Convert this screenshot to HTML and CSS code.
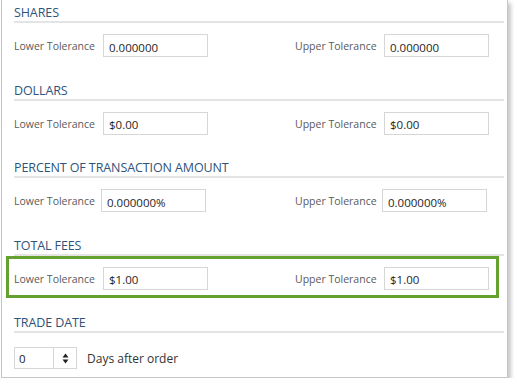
FILE: index.html
```html
<!DOCTYPE html>
<html>
<head>
<meta charset="utf-8">
<link rel="stylesheet" href="styles.css">
</head>
<body>
<div class="panel">
  <section class="group">
    <h2 class="group-title">SHARES</h2>
    <div class="pair">
      <label class="field"><span class="field-label">Lower Tolerance</span><input class="text-input" value="0.000000"></label>
      <label class="field"><span class="field-label">Upper Tolerance</span><input class="text-input" value="0.000000"></label>
    </div>
  </section>
  <section class="group">
    <h2 class="group-title">DOLLARS</h2>
    <div class="pair">
      <label class="field"><span class="field-label">Lower Tolerance</span><input class="text-input" value="$0.00"></label>
      <label class="field"><span class="field-label">Upper Tolerance</span><input class="text-input" value="$0.00"></label>
    </div>
  </section>
  <section class="group">
    <h2 class="group-title">PERCENT OF TRANSACTION AMOUNT</h2>
    <div class="pair pair-shift">
      <label class="field"><span class="field-label">Lower Tolerance</span><input class="text-input" value="0.000000%"></label>
      <label class="field"><span class="field-label">Upper Tolerance</span><input class="text-input" value="0.000000%"></label>
    </div>
  </section>
  <section class="group">
    <h2 class="group-title">TOTAL FEES</h2>
    <div class="pair highlighted">
      <label class="field"><span class="field-label">Lower Tolerance</span><input class="text-input" value="$1.00"></label>
      <label class="field"><span class="field-label">Upper Tolerance</span><input class="text-input" value="$1.00"></label>
    </div>
  </section>
  <section class="group group-last">
    <h2 class="group-title">TRADE DATE</h2>
    <div class="days-row">
      <div class="spinner">
        <span class="spinner-value">0</span>
        <span class="spinner-arrows">
          <svg width="7" height="11" viewBox="0 0 7 11"><path d="M3.5 0.5 L6.5 4.5 L0.5 4.5 Z" fill="#222"/><path d="M3.5 10.5 L6.5 6.5 L0.5 6.5 Z" fill="#222"/></svg>
        </span>
      </div>
      <span class="days-label">Days after order</span>
    </div>
  </section>
</div>
</body>
</html>
```
FILE: styles.css
```css
* { box-sizing: border-box; }
html, body { margin: 0; padding: 0; background: #fff; }
body { font-family: "Open Sans", "Noto Sans", sans-serif; }

.panel {
  margin-left: 1px;
  width: 507px;
  background: #fff;
  border: 1px solid #c6c6c6;
  border-top: none;
  box-shadow: 3px 3px 4px rgba(0,0,0,0.22);
  padding: 4px 3px 8px 12px;
}

.group { margin-bottom: 24.5px; }
.group-last { margin-bottom: 0; }

.group-title {
  margin: 0;
  font-size: 12.5px;
  font-weight: 400;
  line-height: 17px;
  color: #2f5479;
  border-bottom: 2px solid #e4e4e4;
  letter-spacing: -0.1px;
}

.pair {
  margin-top: 11px;
  display: grid;
  grid-template-columns: 281px 1fr;
  height: 23px;
  position: relative;
}
.pair-shift .text-input { margin-left: -2px; }

.highlighted::after {
  content: "";
  position: absolute;
  left: -8px;
  right: 5px;
  top: -11px;
  bottom: -8px;
  border: 3px solid #63a22f;
  pointer-events: none;
}

.field { display: flex; align-items: center; }
.field-label {
  width: 89px;
  font-size: 10.5px;
  color: #5a5a5a;
  padding-top: 1px;
}
.text-input {
  width: 105px;
  height: 23px;
  border: 1px solid #d6d6d6;
  padding: 3px 5px 0;
  font-family: "Open Sans", "Noto Sans", sans-serif;
  font-size: 11.5px;
  color: #1e1e1e;
  background: #fff;
  outline: none;
}

.days-row {
  margin-top: 14px;
  display: flex;
  align-items: center;
}
.spinner {
  width: 63px;
  height: 22px;
  border: 1px solid #d6d6d6;
  display: flex;
}
.spinner-value {
  width: 39px;
  border-right: 1px solid #d6d6d6;
  font-size: 11.5px;
  color: #222;
  padding: 3px 0 0 4px;
}
.spinner-arrows {
  flex: 1;
  display: flex;
  align-items: center;
  justify-content: center;
}
.spinner-arrows svg { display: block; }
.days-label {
  margin-left: 10px;
  font-size: 12px;
  color: #333;
}
```
